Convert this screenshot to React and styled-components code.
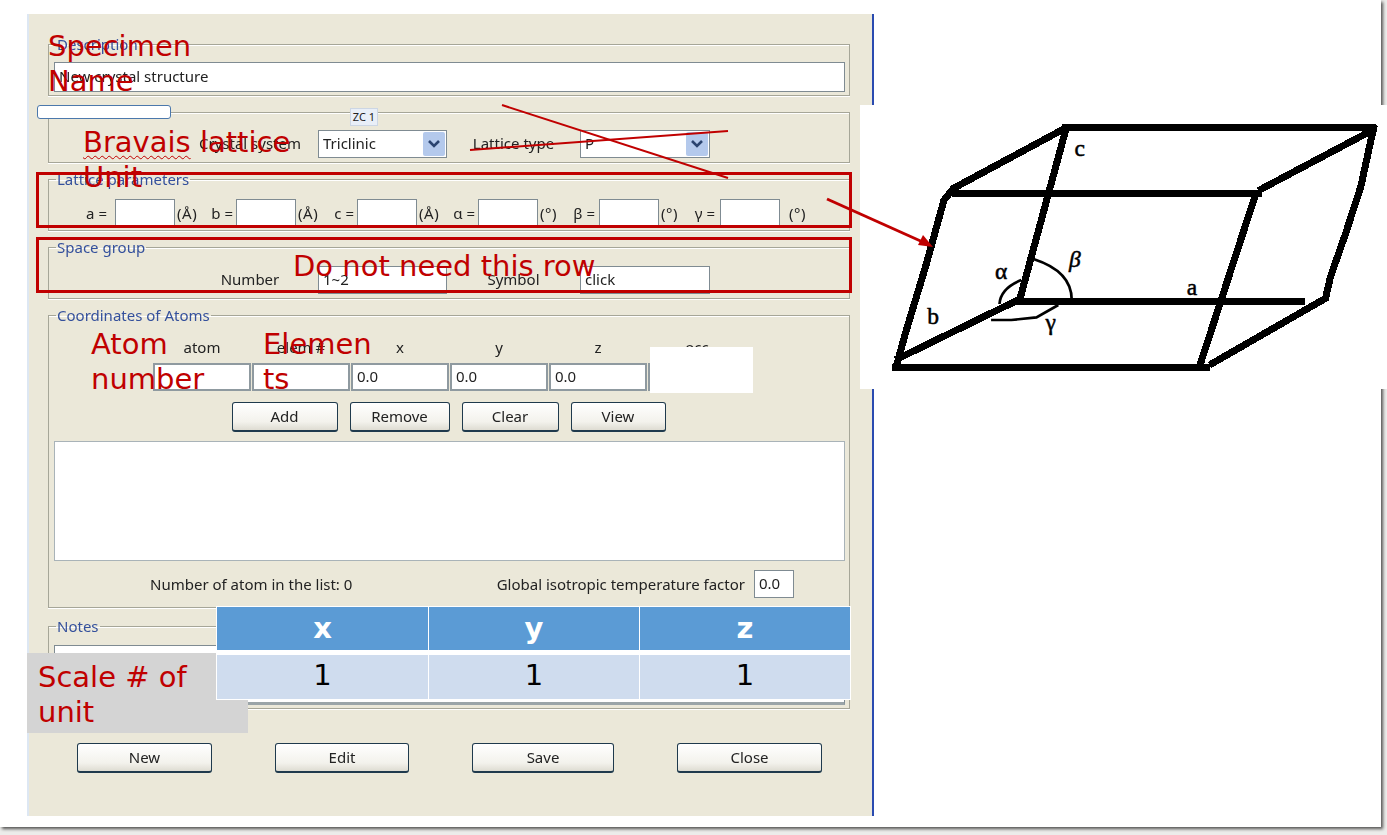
import React from "react";
import styled, { createGlobalStyle } from "styled-components";

const GlobalStyle = createGlobalStyle`
  html, body {
    margin: 0;
    padding: 0;
    background: #ececea;
  }
`;

const LATTICE = [
  { label: "a =", unit: "(Å)", labelGap: 8 },
  { label: "b =", unit: "(Å)" },
  { label: "c =", unit: "(Å)" },
  { label: "α =", unit: "(°)" },
  { label: "β =", unit: "(°)", labelGap: 4 },
  { label: "γ =", unit: "(°)", labelGap: 5, unitGap: 9 },
];

const ATOM_COLUMNS = [
  { label: "atom", value: "" },
  { label: "elem #", value: "" },
  { label: "x", value: "0.0" },
  { label: "y", value: "0.0" },
  { label: "z", value: "0.0" },
  { label: "occ", value: "" },
];

const SelectArrow = () => (
  <ArrowButton>
    <svg width="14" height="10" viewBox="0 0 14 10">
      <path d="M2 2l5 5 5-5" fill="none" stroke="#2b4470" strokeWidth="2.6" />
    </svg>
  </ArrowButton>
);

const App = () => {
  return (
    <Page>
      <GlobalStyle />
      <Slide>
        <Dialog>
          <Group>
            <Legend>Description</Legend>
            <DescriptionBox defaultValue="New crystal structure" />
          </Group>

          <Group $top={9}>
            <Legend>&nbsp;</Legend>
            <FormGrid $top={11}>
              <FieldLabel>Crystal system</FieldLabel>
              <Select>
                Triclinic
                <SelectArrow />
              </Select>
              <FieldLabel>Lattice type</FieldLabel>
              <Select>
                P
                <SelectArrow />
              </Select>
            </FormGrid>
          </Group>

          <Group $top={9}>
            <Legend>Lattice parameters</Legend>
            <LatticeRow>
              {LATTICE.map(item => (
                <LatticeCell key={item.label}>
                  <CellLabel $gap={item.labelGap}>{item.label}</CellLabel>
                  <TextBox $w={60} $h={28} />
                  <CellUnit $gap={item.unitGap}>{item.unit}</CellUnit>
                </LatticeCell>
              ))}
            </LatticeRow>
          </Group>

          <Group $top={9}>
            <Legend>Space group</Legend>
            <FormGrid $top={12}>
              <FieldLabel>Number</FieldLabel>
              <TextBox $h={28} defaultValue="1~2" />
              <FieldLabel>Symbol</FieldLabel>
              <TextBox $h={28} defaultValue="click" />
            </FormGrid>
          </Group>

          <Group $top={9}>
            <Legend>Coordinates of Atoms</Legend>
            <AtomGrid>
              {ATOM_COLUMNS.map(col => (
                <ColumnLabel key={col.label}>{col.label}</ColumnLabel>
              ))}
              {ATOM_COLUMNS.map(col => (
                <TextBox key={col.label} $h={28} $thick defaultValue={col.value} />
              ))}
            </AtomGrid>
            <ActionRow>
              <Button $w={106}>Add</Button>
              <Button $w={100}>Remove</Button>
              <Button $w={97}>Clear</Button>
              <Button $w={95}>View</Button>
            </ActionRow>
            <AtomList />
            <StatusRow>
              <span>Number of atom in the list: 0</span>
              <TempFactor>
                Global isotropic temperature factor
                <TextBox $w={40} $h={28} defaultValue="0.0" />
              </TempFactor>
            </StatusRow>
          </Group>

          <Group $top={11}>
            <Legend>Notes</Legend>
            <NotesBox />
          </Group>

          <FooterRow>
            <Button $w={135}>New</Button>
            <Button $w={134}>Edit</Button>
            <Button $w={142}>Save</Button>
            <Button $w={145}>Close</Button>
          </FooterRow>
        </Dialog>

        <HiddenBar />
        <ZoomTag>ZC 1</ZoomTag>
        <WhitePatch />

        <CellPicture>
          <svg
            width="527"
            height="284"
            viewBox="0 15 1568 852"
            preserveAspectRatio="none"
            shapeRendering="crispEdges"
          >
            <g fill="none" stroke="#000" strokeWidth="21">
              <path d="M95 802H1040" />
              <path d="M108 800L135 700 195 500 250 300 278 265 610 85" />
              <path d="M600 82H1535" />
              <path d="M1530 75L1490 260 1445 400 1400 530 1385 595 1040 795" />
              <path d="M275 280H1195" />
              <path d="M1185 272L1535 85" />
              <path d="M1178 280L1010 800" />
              <path d="M612 90L475 600" />
              <path d="M465 604H1325" />
              <path d="M105 780L470 600" />
            </g>
            <g fill="none" stroke="#000" strokeWidth="8" shapeRendering="auto">
              <path d="M518 478C570 495 630 530 630 600" />
              <path d="M415 612Q418 565 480 540" />
              <path d="M390 660H450L525 652 590 615" />
            </g>
            <PictureText x="638" y="168">c</PictureText>
            <PictureText x="200" y="672">b</PictureText>
            <PictureText x="402" y="538">α</PictureText>
            <PictureText x="622" y="502" fontStyle="italic">β</PictureText>
            <PictureText x="972" y="585">a</PictureText>
            <PictureText x="552" y="690">γ</PictureText>
          </svg>
        </CellPicture>

        <RedFrame $top={172} />
        <RedFrame $top={237} />

        <OverlayLines width="1387" height="835" viewBox="0 0 1387 835">
          <g stroke="#c00000" strokeWidth="2" fill="none">
            <path d="M502 105L728 178" />
            <path d="M470 150L728 131" />
          </g>
          <path d="M827 199L925 243" stroke="#c00000" strokeWidth="3" fill="none" />
          <path d="M933 247L918 245 923 235z" fill="#c00000" />
        </OverlayLines>

        <Note $x={48} $y={29}>
          Specimen
          <br />
          Name
        </Note>
        <Note $x={83} $y={125}>
          <Misspelt>Bravais</Misspelt> lattice
          <br />
          Unit
        </Note>
        <Note $x={293} $y={249}>
          Do not need this row
        </Note>
        <Note $x={91} $y={327}>
          Atom
          <br />
          number
        </Note>
        <Note $x={263} $y={327}>
          Elemen
          <br />
          ts
        </Note>

        <ScaleBox>
          Scale # of
          <br />
          unit
        </ScaleBox>

        <ScaleTable>
          <HeadCell>x</HeadCell>
          <HeadCell>y</HeadCell>
          <HeadCell>z</HeadCell>
          <ValueCell>1</ValueCell>
          <ValueCell>1</ValueCell>
          <ValueCell>1</ValueCell>
        </ScaleTable>
      </Slide>
    </Page>
  );
};

const Page = styled.div`
  width: 1387px;
  height: 835px;
  overflow: hidden;
  background: #ececea;
`;

const Slide = styled.div`
  position: relative;
  box-sizing: border-box;
  width: 1381px;
  height: 827px;
  padding: 14px 0 0 27px;
  background: #fff;
  box-shadow: 2px 2px 3px rgba(0, 0, 0, 0.65);
`;

const Dialog = styled.div`
  box-sizing: border-box;
  width: 847px;
  height: 802px;
  padding: 23px 22px 0 19px;
  background: #ebe8d9;
  border-left: 2px solid #dde7f3;
  border-right: 2px solid #2a4bb0;
  font-family: "Noto Sans", sans-serif;
  font-size: 15px;
  color: #222;
  filter: blur(0.4px);
`;

const Group = styled.fieldset`
  box-sizing: border-box;
  min-width: 0;
  margin: ${p => p.$top || 0}px 0 0;
  padding: 0 4px 3px 5px;
  border: 1px solid #a6a698;
  box-shadow: 0 1px 0 #fff, inset 0 1px 0 #fff;
`;

const Legend = styled.legend`
  padding: 0 1px;
  margin-left: 2px;
  line-height: 14px;
  font-size: 15px;
  color: #34509c;
`;

const TextBox = styled.input`
  display: block;
  box-sizing: border-box;
  width: ${p => (p.$w ? `${p.$w}px` : "100%")};
  height: ${p => p.$h}px;
  padding: 0 4px 2px;
  border: ${p => (p.$thick ? "2px solid #8f9aa0" : "1px solid #7f8b92")};
  border-radius: 0;
  outline: none;
  background: #fff;
  font: inherit;
  color: #222;
`;

const DescriptionBox = styled(TextBox)`
  height: 30px;
  margin-top: 11px;
`;

const FormGrid = styled.div`
  display: grid;
  grid-template-columns: 136px 129px 133px 130px;
  align-items: center;
  margin: ${p => p.$top}px 0 1px 128px;
`;

const FieldLabel = styled.span`
  text-align: center;
  white-space: nowrap;
  padding-bottom: 2px;
`;

const Select = styled.div`
  box-sizing: border-box;
  position: relative;
  height: 28px;
  padding: 0 4px;
  line-height: 25px;
  border: 1px solid #7f8b92;
  background: #fff;
`;

const ArrowButton = styled.span`
  position: absolute;
  top: 1px;
  right: 1px;
  display: flex;
  align-items: center;
  justify-content: center;
  width: 22px;
  height: 24px;
  border-radius: 2px;
  background: #b4c9ec;
`;

const LatticeRow = styled.div`
  display: grid;
  grid-template-columns: repeat(6, 121px);
  margin: 13px 0 0 27px;
`;

const LatticeCell = styled.div`
  display: flex;
  align-items: center;
`;

const CellLabel = styled.span`
  box-sizing: border-box;
  width: 34px;
  padding-right: ${p => p.$gap || 3}px;
  text-align: right;
  white-space: nowrap;
`;

const CellUnit = styled.span`
  margin-left: ${p => p.$gap || 2}px;
  letter-spacing: 0.6px;
  white-space: nowrap;
`;

const AtomGrid = styled.div`
  display: grid;
  grid-template-columns: repeat(6, 98px);
  column-gap: 1px;
  row-gap: 9px;
  margin: 18px 0 0 99px;
`;

const ColumnLabel = styled.span`
  line-height: 14px;
  text-align: center;
`;

const ActionRow = styled.div`
  display: flex;
  justify-content: center;
  gap: 12px;
  margin: 11px 2px 0 0;
`;

const Button = styled.button`
  box-sizing: border-box;
  width: ${p => p.$w}px;
  height: 30px;
  padding: 0 0 2px;
  border: 1px solid #1f3a4d;
  border-bottom-width: 2px;
  border-radius: 3px;
  background: linear-gradient(#fff, #f3f2ec 70%, #dedcd2);
  font: inherit;
  color: #222;
`;

const AtomList = styled.div`
  box-sizing: border-box;
  height: 120px;
  margin-top: 9px;
  border: 1px solid #a9b3b8;
  background: #fff;
`;

const StatusRow = styled.div`
  display: flex;
  align-items: center;
  justify-content: space-between;
  height: 28px;
  margin-top: 9px;
  padding: 0 51px 6px 96px;
`;

const TempFactor = styled.span`
  display: flex;
  align-items: center;
  gap: 9px;
`;

const NotesBox = styled.div`
  box-sizing: border-box;
  height: 60px;
  margin-top: 12px;
  border: 1px solid #7f8b92;
  border-bottom: 3px solid #9aa4a8;
  background: #fff;
`;

const FooterRow = styled.div`
  display: flex;
  gap: 63px;
  margin: 34px 0 0 29px;
`;

const HiddenBar = styled.div`
  position: absolute;
  left: 37px;
  top: 105px;
  box-sizing: border-box;
  width: 134px;
  height: 14px;
  border: 1px solid #4b78ac;
  border-radius: 3px;
  background: #fff;
`;

const ZoomTag = styled.div`
  position: absolute;
  left: 350px;
  top: 108px;
  box-sizing: border-box;
  width: 28px;
  height: 18px;
  border: 1px solid #ccd6e4;
  background: #e9eff8;
  font: 11px/16px "Noto Sans", sans-serif;
  text-align: center;
  color: #222;
`;

const WhitePatch = styled.div`
  position: absolute;
  left: 650px;
  top: 347px;
  width: 103px;
  height: 46px;
  background: #fff;
`;

const CellPicture = styled.div`
  position: absolute;
  left: 860px;
  top: 105px;
  width: 527px;
  height: 284px;
  background: #fff;
`;

const PictureText = styled.text`
  font-family: "Liberation Serif", serif;
  font-size: 70px;
  fill: #000;
  stroke: #000;
  stroke-width: 1.5px;
`;

const RedFrame = styled.div`
  position: absolute;
  left: 36px;
  top: ${p => p.$top}px;
  box-sizing: border-box;
  width: 816px;
  height: 56px;
  border: 3px solid #c00000;
`;

const OverlayLines = styled.svg`
  position: absolute;
  left: 0;
  top: 0;
  pointer-events: none;
`;

const Note = styled.div`
  position: absolute;
  left: ${p => p.$x}px;
  top: ${p => p.$y}px;
  font-family: "DejaVu Sans", sans-serif;
  font-size: 29px;
  line-height: 35px;
  white-space: nowrap;
  color: #c00000;
`;

const Misspelt = styled.span`
  text-decoration: underline wavy #c00000 1px;
  text-underline-offset: 3px;
`;

const ScaleBox = styled.div`
  position: absolute;
  left: 27px;
  top: 653px;
  box-sizing: border-box;
  width: 221px;
  height: 80px;
  padding: 7px 0 0 11px;
  background: #d4d4d4;
  font-family: "DejaVu Sans", sans-serif;
  font-size: 29px;
  line-height: 35px;
  color: #c00000;
`;

const ScaleTable = styled.div`
  position: absolute;
  left: 216px;
  top: 606px;
  box-sizing: border-box;
  width: 635px;
  display: grid;
  grid-template-columns: 211px 210px 210px;
  column-gap: 1px;
  row-gap: 5px;
  padding: 1px;
  background: #fff;
  font-family: "DejaVu Sans", sans-serif;
  font-size: 29px;
  text-align: center;
`;

const HeadCell = styled.div`
  height: 43px;
  line-height: 43px;
  background: #5b9bd5;
  font-weight: 700;
  color: #fff;
`;

const ValueCell = styled.div`
  height: 44px;
  line-height: 40px;
  background: #cfdcee;
  color: #000;
`;

export default App;
